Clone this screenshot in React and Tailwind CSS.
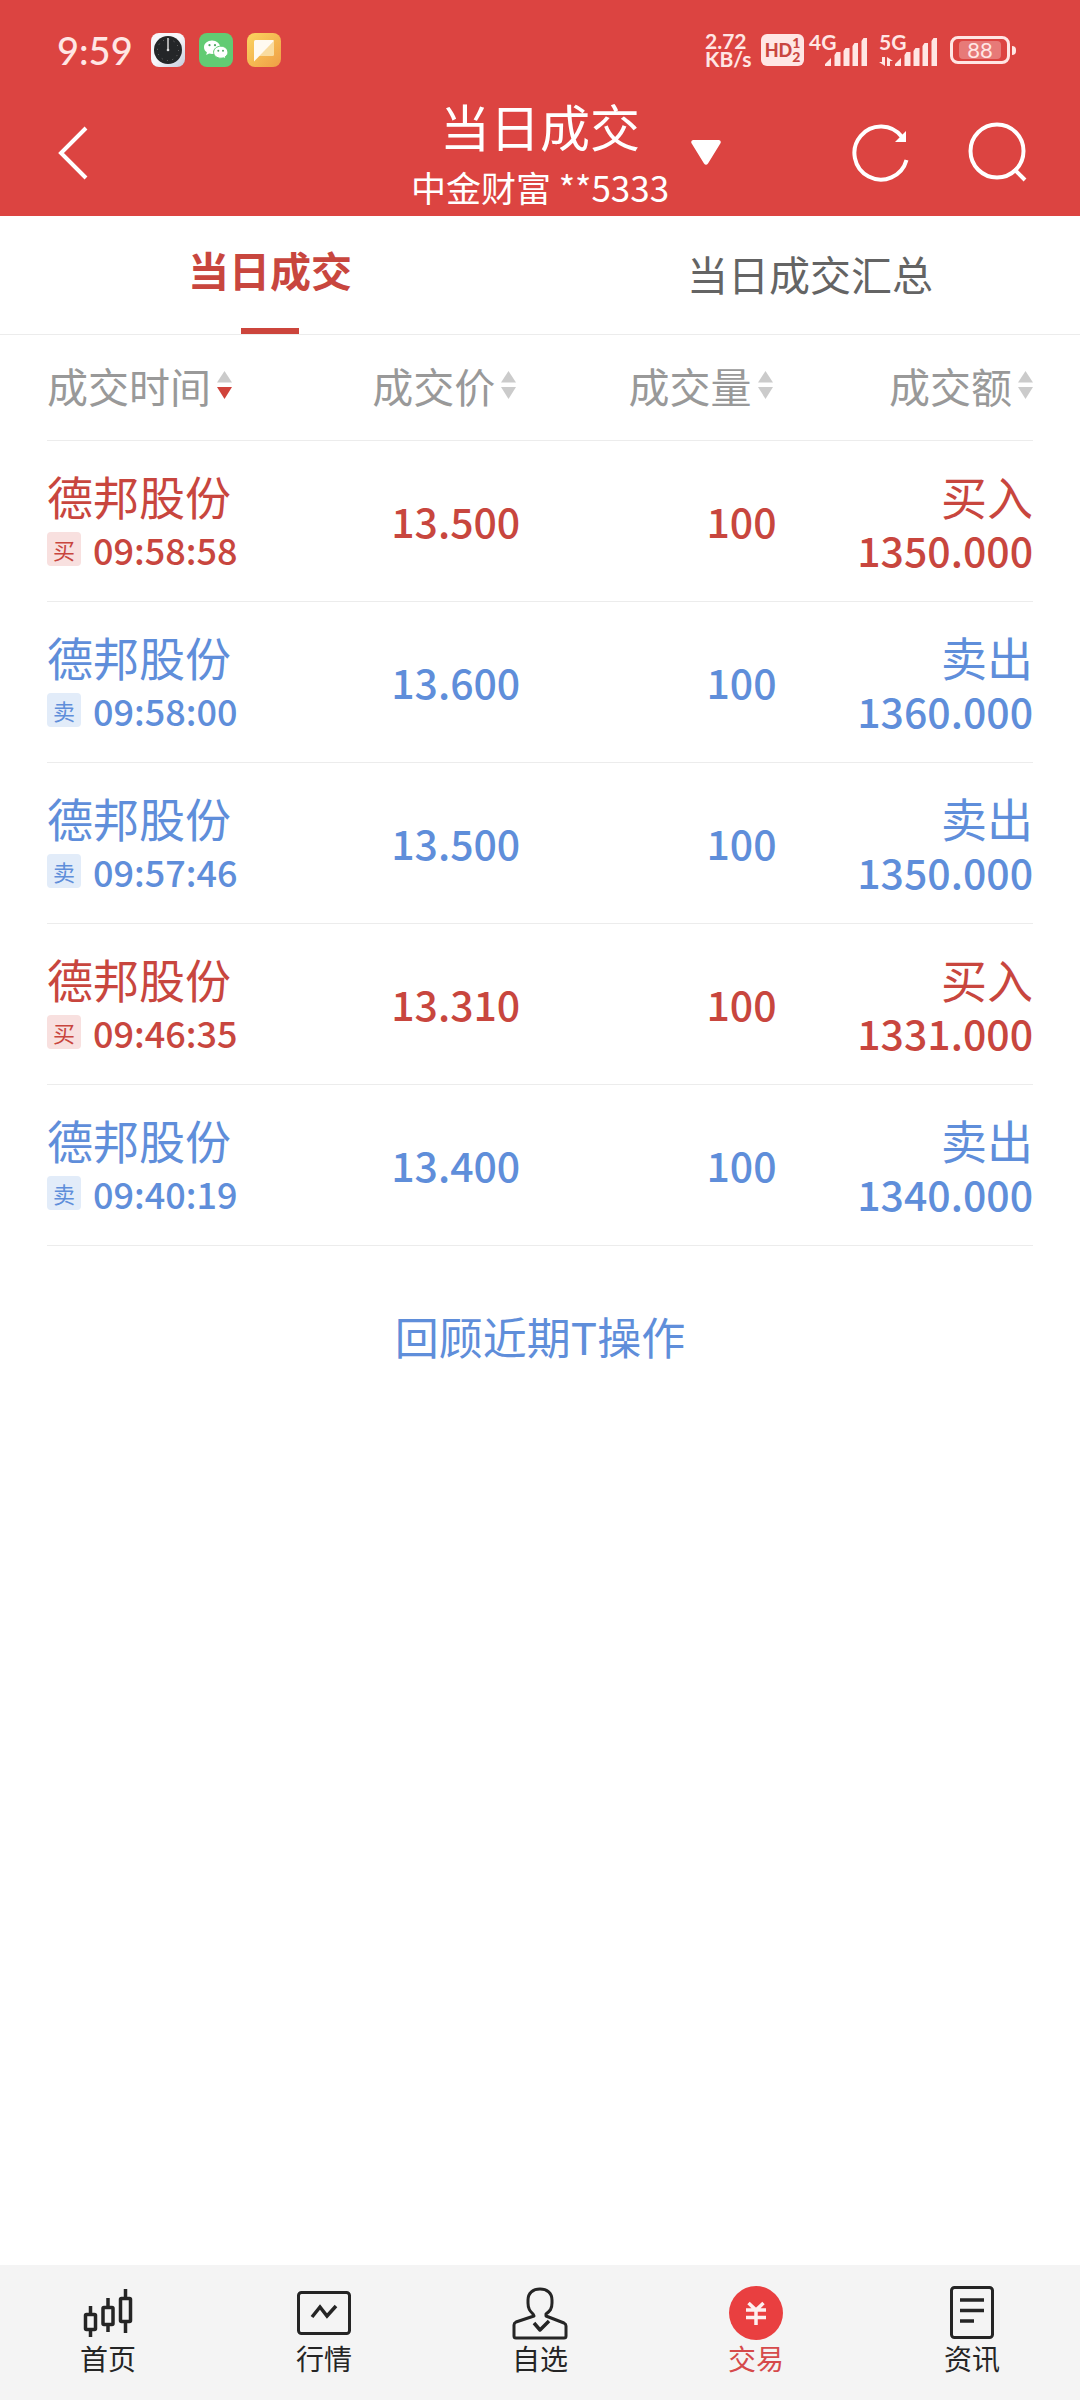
import React, { useState } from "react";

const trades = [
  { id: 1, name: "德邦股份", side: "buy", time: "09:58:58", price: "13.500", volume: "100", amount: "1350.000" },
  { id: 2, name: "德邦股份", side: "sell", time: "09:58:00", price: "13.600", volume: "100", amount: "1360.000" },
  { id: 3, name: "德邦股份", side: "sell", time: "09:57:46", price: "13.500", volume: "100", amount: "1350.000" },
  { id: 4, name: "德邦股份", side: "buy", time: "09:46:35", price: "13.310", volume: "100", amount: "1331.000" },
  { id: 5, name: "德邦股份", side: "sell", time: "09:40:19", price: "13.400", volume: "100", amount: "1340.000" },
];

const sides = {
  buy: { tag: "买", label: "买入", text: "text-[#c8463e]", tagBg: "bg-[#f8e0df]" },
  sell: { tag: "卖", label: "卖出", text: "text-[#5f8eda]", tagBg: "bg-[#e2ecf9]" },
};

const columns = [
  { key: "time", label: "成交时间", cell: "w-[24%]", align: "justify-start" },
  { key: "price", label: "成交价", cell: "w-[24%] pr-1", align: "justify-end" },
  { key: "volume", label: "成交量", cell: "w-[26%] pr-1", align: "justify-end" },
  { key: "amount", label: "成交额", cell: "w-[26%]", align: "justify-end" },
];

const SignalBars = () => (
  <svg width="42" height="28" viewBox="0 0 42 28" fill="currentColor">
    <path d="M0 28v-2l6-6v8zM9.500 28V17l2-3h4v14zM18.500 28V13l2-3h4v18zM27.500 28V8l2-3h3.500v23zM36.500 28V3l2-3H42v28z" />
  </svg>
);

const StatusBar = () => (
  <div className="flex h-[100px] items-center justify-between pl-[57px] pr-[64px] font-[Lato,sans-serif] text-[#ffe6e4]">
    <div className="flex items-center gap-[14px]">
      <span className="mr-1 text-[38px] leading-none font-medium">9:59</span>
      <svg width="34" height="34" viewBox="0 0 34 34">
        <defs>
          <linearGradient id="clock" x1="0" y1="0" x2="1" y2="1">
            <stop offset="0.500" stopColor="#f7f6fa" />
            <stop offset="1" stopColor="#c3cbdb" />
          </linearGradient>
        </defs>
        <rect width="34" height="34" rx="8" fill="url(#clock)" />
        <circle cx="17" cy="17" r="14" fill="#242628" />
        <circle cx="17" cy="17" r="10.500" fill="none" stroke="#777" strokeWidth="1" strokeDasharray="1 4.500" />
        <path d="M17 5v12" stroke="#aaa" strokeWidth="2" />
        <circle cx="17" cy="17" r="1.300" fill="#ddd" />
      </svg>
      <svg width="34" height="34" viewBox="0 0 34 34">
        <rect width="34" height="34" rx="8" fill="#62cb73" />
        <path d="M13 7.500c-4.500 0-8 3-8 6.700 0 2.100 1.100 3.900 2.900 5.100l-.7 2.700 2.900-1.500c1 .3 2 .4 3 .4 4.400 0 8-3 8-6.700s-3.600-6.700-8.100-6.700z" fill="#fff" />
        <path d="M21.800 13.200c-4 0-7.200 2.700-7.200 6s3.200 6 7.200 6c.9 0 1.800-.1 2.600-.4l2.300 1.300-.6-2.200c1.800-1.100 2.800-2.800 2.800-4.700 0-3.300-3.200-6-7.100-6z" fill="#fff" stroke="#62cb73" />
        <g fill="#4fa862">
          <circle cx="10.500" cy="12.200" r="1.100" />
          <circle cx="16" cy="12.200" r="1.100" />
          <circle cx="19.300" cy="17.800" r="1" />
          <circle cx="24" cy="17.800" r="1" />
        </g>
      </svg>
      <svg width="34" height="34" viewBox="0 0 34 34">
        <defs>
          <linearGradient id="note" x1="0" y1="0" x2="1" y2="1">
            <stop offset="0" stopColor="#fbd560" />
            <stop offset="1" stopColor="#ef9d45" />
          </linearGradient>
        </defs>
        <rect width="34" height="34" rx="8" fill="url(#note)" />
        <path d="M27 8v13.500q0 1.500-1.500 1.500H12z" fill="#f9dca0" />
        <path d="M7 28.500V8.500Q7 7 8.500 7H26q1.500 0 .5 1.500z" fill="#fffaf0" />
      </svg>
    </div>

    <div className="flex items-center">
      <div className="flex w-[56px] flex-col text-[21px] leading-[18px] font-bold">
        <span>2.72</span>
        <span>KB/s</span>
      </div>
      <div className="flex h-8 w-[43px] items-center justify-center rounded-md bg-[#ffe6e4] text-[#c9463f]">
        <span className="text-[18px] leading-none font-black">HD</span>
        <span className="flex flex-col text-[14px] leading-[14px] font-black">
          <span>1</span>
          <span>2</span>
        </span>
      </div>
      <div className="relative ml-[21px] h-8 pt-1">
        <SignalBars />
        <span className="absolute top-0 -left-4 text-[21px] leading-4 font-bold">4G</span>
      </div>
      <div className="relative ml-[28px] h-8 pt-1">
        <SignalBars />
        <span className="absolute top-0 -left-4 text-[21px] leading-4 font-bold">5G</span>
        <svg className="absolute top-[23px] -left-4" width="14" height="9" viewBox="0 0 14 9" fill="currentColor">
          <path d="M3 0h3v9L0 5h3zM8 0l6 4h-3v5H8z" />
        </svg>
      </div>
      <div className="ml-[13px] flex h-7 w-[60px] items-center justify-center rounded-lg border-[3px] border-current">
        <span className="flex h-[18px] w-[42px] items-center justify-center rounded-sm bg-[#e77a78] text-[22px] leading-none">
          88
        </span>
      </div>
      <span className="ml-[2px] h-[9px] w-1 rounded-r-sm bg-current" />
    </div>
  </div>
);

const Header = () => (
  <header className="bg-[#dc4441] text-white">
    <StatusBar />
    <div className="grid h-[116px] grid-cols-[1fr_auto_1fr]">
      <button type="button" aria-label="返回" className="flex w-[110px] items-start pt-[26px] pl-[58px]">
        <svg width="30" height="54" viewBox="0 0 30 54" fill="none" stroke="currentColor" strokeWidth="4">
          <path d="M28 2 3 27l25 25" />
        </svg>
      </button>
      <div className="flex flex-col items-center">
        <h1 className="text-[50px] leading-[50px]">当日成交</h1>
        <p className="text-[35px] leading-[74px] whitespace-nowrap">中金财富 **5333</p>
      </div>
      <div className="flex items-start justify-between pt-[22px] pr-[52px] pl-[22px]">
        <button type="button" aria-label="切换账户" className="pt-[18px]">
          <svg width="30" height="26" viewBox="0 0 30 26" fill="currentColor">
            <path d="M2 0h26q3 1 1 4L17 23.500q-2 2.500-4 0L1 4q-2-3 1-4z" />
          </svg>
        </button>
        <div className="flex gap-14">
          <button type="button" aria-label="刷新">
            <svg width="60" height="60" viewBox="0 0 60 60" fill="none" stroke="currentColor" strokeWidth="4">
              <path d="M54.500 38A26.500 26.500 0 1 1 50 15" />
              <path d="M54 9v11H43z" fill="currentColor" stroke="none" />
            </svg>
          </button>
          <button type="button" aria-label="搜索">
            <svg width="60" height="60" viewBox="0 0 60 60" fill="none" stroke="currentColor" strokeWidth="4">
              <circle cx="29" cy="29" r="26.500" />
              <path d="M46 47l11 11" />
            </svg>
          </button>
        </div>
      </div>
    </div>
  </header>
);

const SortIcon = ({ active }) => (
  <svg width="15" height="28" viewBox="0 0 15 28" fill="#cbcbcb">
    <path d="M7.500 0 15 11.500H0z" />
    <path d="M0 16h15L7.500 28z" fill={active ? "#d0433b" : "#cbcbcb"} />
  </svg>
);

const TradeRow = ({ trade }) => {
  const side = sides[trade.side];

  return (
    <tr className={`h-[161px] border-b border-[#ececec] ${side.text}`}>
      <td>
        <div className="text-[46px] leading-[56px]">{trade.name}</div>
        <div className="flex items-center gap-3">
          <span
            className={`flex size-[34px] items-center justify-center rounded-sm text-[22px] leading-none ${side.tagBg}`}
          >
            {side.tag}
          </span>
          <span className="text-[36px] leading-[52px] font-medium">{trade.time}</span>
        </div>
      </td>
      <td className="text-right text-[41px] font-medium">{trade.price}</td>
      <td className="text-right text-[41px] font-medium">{trade.volume}</td>
      <td className="text-right">
        <div className="text-[46px] leading-[56px]">{side.label}</div>
        <div className="text-[41px] leading-[52px] font-medium">{trade.amount}</div>
      </td>
    </tr>
  );
};

const navItems = [
  {
    label: "首页",
    icon: (
      <g strokeWidth="3.500">
        <rect x="5.500" y="28.500" width="10" height="15" rx="1" />
        <rect x="23" y="21.500" width="10" height="17" rx="1" />
        <rect x="40.500" y="12.500" width="10" height="23" rx="1" />
        <path d="M10.500 20v8M10.500 44v7M28 12v9M28 39v7M45.500 3v9M45.500 36v11" />
      </g>
    ),
  },
  {
    label: "行情",
    icon: (
      <g>
        <rect x="2.500" y="6.500" width="51" height="41" rx="3" />
        <path d="M16 31l8-10 7 9 9-10" strokeWidth="3.500" />
      </g>
    ),
  },
  {
    label: "自选",
    icon: (
      <g strokeLinejoin="round">
        <path d="M21 28c-3-3-5-5-5-11v-3c0-7 5-11 12-11s12 4 12 11v3c0 6-2 8-6 11v2l18 7q2 1 2 3v10q0 2-2 2H4q-2 0-2-2V39q0-2 2-3l18-6z" />
        <path d="M22 37l6 7 9-9" strokeWidth="3.500" />
      </g>
    ),
  },
  {
    label: "交易",
    active: true,
    icon: (
      <g>
        <circle cx="28" cy="27" r="27" fill="#e93f40" stroke="none" />
        <path d="M20.500 17l7.500 7 7.500-7M18 24h20M18 31.500h20M28 24v15" stroke="#fdf0f0" strokeWidth="3.500" />
      </g>
    ),
  },
  {
    label: "资讯",
    icon: (
      <g>
        <rect x="7.500" y="1.500" width="41" height="50" rx="3" />
        <path d="M16 14h24M16 24.500h24M16 35h14" strokeWidth="3.500" />
      </g>
    ),
  },
];

const BottomNav = () => (
  <nav className="mt-auto grid h-[135px] grid-cols-5 bg-[#f4f4f4]">
    {navItems.map((item) => (
      <a
        key={item.label}
        href="#"
        className={`flex flex-col items-center pt-[21px] ${item.active ? "text-[#d64a4b]" : "text-[#252525]"}`}
      >
        <svg width="56" height="54" viewBox="0 0 56 54" fill="none" stroke="currentColor" strokeWidth="3">
          {item.icon}
        </svg>
        <span className="text-[28px] leading-9">{item.label}</span>
      </a>
    ))}
  </nav>
);

const App = () => {
  const [tab, setTab] = useState("当日成交");
  const [sortKey, setSortKey] = useState("time");

  return (
    <div className="flex min-h-screen flex-col bg-white font-['Noto_Sans_CJK_SC',sans-serif]">
      <Header />

      <div className="grid h-[119px] grid-cols-2 border-b border-[#ececec]">
        {["当日成交", "当日成交汇总"].map((name) => (
          <button
            key={name}
            type="button"
            onClick={() => setTab(name)}
            className={`flex flex-col items-center justify-between text-[41px] leading-[62px] ${
              tab === name ? "pt-[22px] font-bold text-[#c8463e]" : "pt-[26px] text-[#646464]"
            }`}
          >
            {name}
            {tab === name && <span className="h-[6px] w-[58px] bg-[#cc453c]" />}
          </button>
        ))}
      </div>

      <main className="px-[47px]">
        <table className="w-full table-fixed border-collapse">
          <thead>
            <tr className="h-[105px] border-b border-[#ececec]">
              {columns.map((col) => (
                <th key={col.key} className={`pb-1 font-normal ${col.cell}`}>
                  <button
                    type="button"
                    onClick={() => setSortKey(col.key)}
                    className={`flex w-full items-center gap-[6px] text-[41px] whitespace-nowrap text-[#999999] ${col.align}`}
                  >
                    {col.label}
                    <SortIcon active={sortKey === col.key} />
                  </button>
                </th>
              ))}
            </tr>
          </thead>
          <tbody>
            {trades.map((trade) => (
              <TradeRow key={trade.id} trade={trade} />
            ))}
          </tbody>
        </table>

        <div className="flex justify-center pt-[58px]">
          <a href="#" className="text-[44px] leading-[64px] text-[#5f8eda]">
            回顾近期T操作
          </a>
        </div>
      </main>

      <BottomNav />
    </div>
  );
};

export default App;
